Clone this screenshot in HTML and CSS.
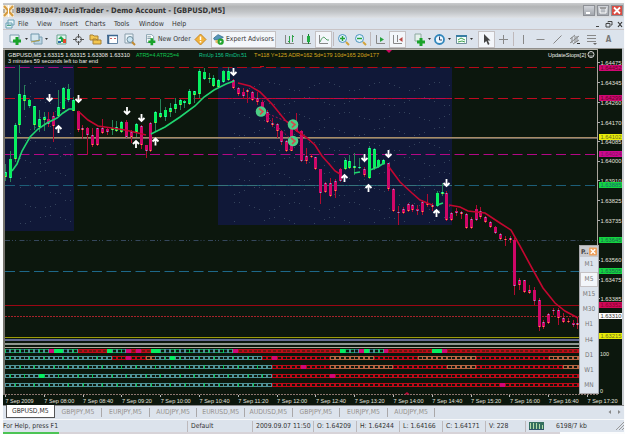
FILE: index.html
```html
<!DOCTYPE html>
<html lang="en">
<head>
    <meta charset="UTF-8">
    <title>AxisTrader</title>
    <link rel="stylesheet" href="styles.css">
</head>
<body>
    <div class="window">
        <header class="titlebar">
            <svg class="logo" viewBox="0 0 11 12"><rect width="11" height="12" fill="#f6ead2"/><path d="M1 1L10 11M10 1L1 11" stroke="#d59a3c" stroke-width="2"/><path d="M5.500 0V12" stroke="#fff" stroke-width="1"/><path d="M1 4V8M10 4V8" stroke="#777"/></svg>
            <h1>889381047: AxisTrader - Demo Account - [GBPUSD,M5]</h1>
            <div class="window-buttons">
                <span><svg viewBox="0 0 12 11"><path d="M3 8H7" stroke="#fff" stroke-width="2"/></svg></span>
                <span><svg viewBox="0 0 12 11"><path d="M3 3H9V8H3Z" stroke="#fff" fill="none"/><path d="M3 3H9" stroke="#555"/></svg></span>
                <span class="close"><svg viewBox="0 0 12 11"><path d="M3 2.500L9 8.500M9 2.500L3 8.500" stroke="#fff" stroke-width="1.800"/></svg></span>
            </div>
        </header>
        <nav class="menu">
            <svg class="menu-icon" viewBox="0 0 10 10"><path d="M3 1H9V6H3ZM1 4H7V9H1Z" fill="#e9f6f8" stroke="#6a9fb4"/><path d="M2 6.500H6" stroke="#53a684"/></svg>
            <span>File</span><span>View</span><span>Insert</span><span>Charts</span><span>Tools</span><span>Window</span><span>Help</span>
            <div class="mdi">
                <svg viewBox="0 0 33 10"><path d="M5 7.500H8M17 3.500V2.500H21V6H20M15 4.500H19V8H15Z" fill="none" stroke="#444"/><path d="M27 3L31 8M31 3L27 8" stroke="#333" stroke-width="1.200"/></svg>
            </div>
        </nav>
        <div class="toolbar">
            <i class="grip"></i>
            <svg class="tool" viewBox="0 0 17 17"><path d="M2 4H11V11H2Z" fill="#eaf3f3" stroke="#7a9eae"/><path d="M9 6V14M5 10H13" stroke="#19a32a" stroke-width="3"/></svg>
            <i class="drop"></i>
            <svg class="tool" viewBox="0 0 17 17"><path d="M6 6H14V13H6Z" fill="#bcd5e3" stroke="#7c9fb2"/><path d="M3 3H11V10H3Z" fill="#d4e6ef" stroke="#6f97ac"/><path d="M3 11L8 10L12 9" stroke="#ad9d48"/></svg>
            <i class="drop"></i>
            <i class="grip"></i>
            <svg class="tool" viewBox="0 0 17 17"><path d="M4 4H13V13H4Z" fill="#e2f4ee" stroke="#6aa391"/><path d="M5 8L8 5L11 8ZM8 8H10V11H8Z" fill="#19a847"/><path d="M10 8H13V12H10Z" fill="#e04b2e"/><path d="M5 11H8" stroke="#2868a8" stroke-width="2"/></svg>
            <svg class="tool" viewBox="0 0 17 17"><circle cx="8.500" cy="8.500" r="3" fill="none" stroke="#555"/><path d="M8.500 3V7M8.500 10V14M3 8.500H7M10 8.500H14" stroke="#555"/></svg>
            <svg class="tool" viewBox="0 0 17 17"><path d="M3 4H6L7 5H11V9H3ZM6 8H9L10 9H14V13H6Z" fill="#f3c650" stroke="#a98132"/></svg>
            <svg class="tool" viewBox="0 0 17 17"><path d="M3.500 4.500H13.500V12.500H3.500Z" fill="#fff" stroke="#6685a2"/><path d="M3 4.500H14M4.500 4V13" stroke="#3c668f" stroke-width="1.500"/><path d="M6 7.500H8M10 7.500H12" stroke="#c66"/></svg>
            <svg class="tool" viewBox="0 0 17 17"><path d="M4 3H12V12H4Z" fill="#edf5fa" stroke="#899daa"/><circle cx="9" cy="8.500" r="3" fill="#c9e5f3" stroke="#708c9b"/><path d="M11 11L14 14" stroke="#c28b32" stroke-width="2"/></svg>
            <i class="grip"></i>
            <span class="wide-tool new-order"><svg viewBox="0 0 17 17"><path d="M4 3H10L12 5V12H4Z" fill="#fff" stroke="#819daa"/><path d="M5 5.500H9M5 7.500H10" stroke="#6b8c99"/><path d="M10 7V15M6 11H14" stroke="#19a32a" stroke-width="3"/></svg>New Order</span>
            <svg class="tool alert" viewBox="0 0 17 17"><path d="M8.500 3L14 8.500L8.500 14L3 8.500Z" fill="#f3b43d" stroke="#c78824"/><path d="M8.500 5.500V9M8.500 10V11.500" stroke="#fff" stroke-width="1.500"/></svg>
            <span class="wide-tool experts pressed"><svg viewBox="0 0 17 17"><path d="M3 7L8 3L14 6L10 8L4 9Z" fill="#5796ba" stroke="#3d7493"/><path d="M5 9H9V14L5 12Z" fill="#e3b968"/><circle cx="11" cy="11" r="3.500" fill="#22a52e"/><path d="M10 9.500L12.500 11L10 12.500Z" fill="#fff"/></svg>Expert Advisors</span>
            <i class="grip"></i>
            <svg class="tool" viewBox="0 0 17 17"><path d="M4.500 4V12.500H13" fill="none" stroke="#888"/><path d="M8.500 5V12M7 10.500H8M11.500 4V11M12 5.500H13" stroke="#31a24a"/></svg>
            <svg class="tool" viewBox="0 0 17 17"><path d="M4.500 4V12.500H13" fill="none" stroke="#888"/><path d="M10.500 3V13" stroke="#167e2f"/><path d="M9 5H12V11H9Z" fill="#22ac42"/></svg>
            <svg class="tool pressed" viewBox="0 0 17 17"><path d="M4.500 4V12.500H13" fill="none" stroke="#888"/><path d="M5 11Q8 4 10 7T14 9" fill="none" stroke="#56a069"/></svg>
            <i class="sep"></i>
            <svg class="tool" viewBox="0 0 17 17"><circle cx="7.500" cy="7.500" r="4" fill="#dff2fb" stroke="#4c94bd"/><path d="M11 11L14 14" stroke="#d1a33c" stroke-width="2"/><path d="M7.500 5V10M5 7.500H10" stroke="#21a135" stroke-width="1.400"/></svg>
            <svg class="tool" viewBox="0 0 17 17"><circle cx="7.500" cy="7.500" r="4" fill="#dff2fb" stroke="#4c94bd"/><path d="M11 11L14 14" stroke="#d1a33c" stroke-width="2"/><path d="M5 7.500H10" stroke="#21a135" stroke-width="1.400"/></svg>
            <i class="sep"></i>
            <svg class="tool" viewBox="0 0 17 17"><path d="M4.500 4V12.500H13" fill="none" stroke="#888"/><path d="M8 6L12 8.500L8 11Z" fill="#26a23c"/></svg>
            <svg class="tool pressed" viewBox="0 0 17 17"><path d="M4.500 4V12.500H13M8.500 4V11" fill="none" stroke="#888"/><path d="M13.500 6V11L10 8.500Z" fill="#ba4642"/></svg>
            <i class="grip"></i>
            <svg class="tool" viewBox="0 0 17 17"><path d="M4 3H10V10H4Z" fill="#e5f1eb" stroke="#8ea9a0"/><path d="M10 7V15M6 11H14" stroke="#19a32a" stroke-width="3"/></svg>
            <i class="drop"></i>
            <svg class="tool" viewBox="0 0 17 17"><circle cx="8.500" cy="8.500" r="4.500" fill="#eef8ff" stroke="#3186bb" stroke-width="1.800"/><path d="M8.500 5.500V9H11" fill="none" stroke="#346"/></svg>
            <i class="drop"></i>
            <svg class="tool spaced" viewBox="0 0 17 17"><path d="M3.500 4.500H13.500V12.500H3.500Z" fill="#f4fffa" stroke="#718f9e"/><path d="M3 5H14" stroke="#397da3" stroke-width="2"/><path d="M5 9L8 7L12 9M5 11L9 10L12 11" fill="none" stroke="#41a150"/></svg>
            <i class="drop"></i>
            <i class="grip"></i>
            <svg class="tool pressed" viewBox="0 0 17 17"><path d="M6 3V12L8.300 10L10 14L11.500 13L9.800 9.500H12.500Z" fill="#444"/></svg>
            <svg class="tool" viewBox="0 0 17 17"><path d="M8.500 4V13M4 8.500H13" stroke="#888"/></svg>
            <i class="sep"></i>
            <svg class="tool" viewBox="0 0 17 17"><path d="M8.500 4V13" stroke="#888"/></svg>
            <svg class="tool" viewBox="0 0 17 17"><path d="M4.500 8.500H12.500" stroke="#888"/></svg>
            <svg class="tool" viewBox="0 0 17 17"><path d="M4.500 12.500L12.500 4.500" stroke="#888"/></svg>
            <svg class="tool" viewBox="0 0 17 17"><path d="M4 8L9 4M4 12L13 5M7 13L13 9M6 6V12M9 5V12M11 5V11" stroke="#888"/><path d="M11 12.500H14" stroke="#333"/></svg>
            <svg class="tool" viewBox="0 0 17 17"><path d="M4 4.500H13M4 7.500H13M4 10.500H13" stroke="#888"/><path d="M10 12H14L12 14Z" fill="#666"/></svg>
            <span class="tool letter">A</span>
        </div>
        <main class="chart">
            <svg id="chart" viewBox="0 48 621 357"></svg>
            <aside class="periods">
                <div class="periods-head">P..<svg viewBox="0 0 9 9"><rect width="9" height="9" rx="1" fill="#eda05c"/><path d="M2 2L7 7M7 2L2 7" stroke="#fff" stroke-width="1.500"/></svg></div>
                <span>M1</span><span class="pressed">M5</span><span>M15</span><span>M30</span><span>H1</span><span>H4</span><span>D1</span><span>W1</span><span>MN</span>
            </aside>
        </main>
        <div class="tabs">
            <span class="active">GBPUSD,M5</span><span>GBPJPY,M5</span><span>EURJPY,M5</span><span>AUDJPY,M5</span><span>EURUSD,M5</span><span>AUDUSD,M5</span><span>GBPJPY,M5</span><span>EURJPY,M5</span><span>AUDJPY,M5</span>
            <svg class="tab-scroll" viewBox="0 0 16 8"><path d="M4 2V6L1.500 4ZM11 2V6L13.500 4Z" fill="#888"/></svg>
        </div>
        <footer class="status">
            <span>For Help, press F1</span>
            <span>Default</span>
            <span>2009.09.07 11:50</span>
            <span>O: 1.64209</span>
            <span>H: 1.64244</span>
            <span>L: 1.64166</span>
            <span>C: 1.64171</span>
            <span>V: 228</span>
            <span class="traffic"><svg viewBox="0 0 15 8"><rect width="15" height="8" fill="#35705f"/><path d="M1.500 1V7M4.500 1V7M7.500 1V7M10.500 2V7M13.500 3V7" stroke="#b4d9a9"/><path d="M0 7.500H15" stroke="#31546c"/></svg>6198/7 kb</span>
            <svg class="resize" viewBox="0 0 8 8"><path d="M0 8L8 0M3 8L8 3M6 8L8 6" stroke="#999"/></svg>
        </footer>
    </div>
    <div class="below"></div>
    <script src="chart.js"></script>
</body>
</html>
```
FILE: styles.css
```css
body {
    margin: 0;
    padding: 3px 1px 0 3px;
    background: #fbfcfd;
    font-family: "DejaVu Sans Condensed", "Noto Sans", sans-serif;
    font-size: 6.8px;
    color: #333;
    overflow: hidden;
}
.window {
    width: 621px;
    height: 429px;
    display: flex;
    flex-direction: column;
    background: #dce3ec;
}
.titlebar {
    height: 15px;
    flex: none;
    display: flex;
    align-items: center;
    background: linear-gradient(#c9cbcd, #b2b4b5 25%, #c2c5c8 60%, #dfe2e6);
}
.logo {
    width: 11px;
    height: 12px;
}
h1 {
    margin: 0 0 0 2px;
    font-size: 7.5px;
    font-weight: bold;
    color: #333;
    white-space: nowrap;
}
.window-buttons {
    margin-left: auto;
    margin-right: 1px;
    display: flex;
    gap: 2px;
}
.window-buttons span {
    width: 12px;
    height: 11px;
    display: flex;
    background: linear-gradient(#d6d9de, #9da1a8);
    outline: 1px solid #8d9096;
    outline-offset: -1px;
}
.window-buttons .close {
    background: #d94c43;
}
.menu {
    height: 12px;
    box-sizing: border-box;
    flex: none;
    display: flex;
    align-items: center;
    border-bottom: 1px solid #c9c4c6;
    font-size: 7px;
}
.menu-icon {
    width: 10px;
    height: 10px;
    margin: 0 4px 0 2px;
}
.menu span {
    width: 24px;
    margin-left: -1px;
    white-space: nowrap;
}
.menu span:nth-of-type(1) { width: 20px; }
.menu span:nth-of-type(3) { width: 26px; }
.menu span:nth-of-type(4) { width: 30px; }
.menu span:nth-of-type(5) { width: 26px; }
.menu span:nth-of-type(6) { width: 34px; }
.mdi {
    margin-left: auto;
    width: 33px;
    height: 10px;
    display: flex;
}
.toolbar {
    height: 18px;
    flex: none;
    display: flex;
    align-items: center;
}
.tool {
    width: 17px;
    height: 17px;
    flex: none;
}
.spaced {
    margin-left: 2px;
}
.pressed {
    background: #f3f6fa;
    outline: 1px solid #c5c2c4;
    outline-offset: -1px;
}
.grip {
    width: 5px;
    height: 14px;
    flex: none;
    background: radial-gradient(#a8a5a8 35%, transparent 40%) 1px 0 / 2px 2px repeat-y;
}
.sep {
    width: 3px;
    height: 14px;
    flex: none;
    background: linear-gradient(90deg, transparent 33%, #bfb9bb 33%, #bfb9bb 66%, transparent 66%);
}
.drop {
    width: 3px;
    height: 2px;
    flex: none;
    background: #333;
    clip-path: polygon(0 0, 100% 0, 50% 100%);
}
.wide-tool {
    height: 17px;
    display: flex;
    align-items: center;
    white-space: nowrap;
    flex: none;
}
.wide-tool svg {
    width: 15px;
    height: 15px;
}
.new-order {
    width: 49px;
}
.experts {
    width: 65px;
    margin-left: 2px;
}
.letter {
    font-size: 8px;
    font-weight: bold;
    color: #777;
    text-align: center;
    line-height: 17px;
}
.chart {
    position: relative;
    height: 357px;
    flex: none;
    background: #0c170d;
}
#chart {
    display: block;
    width: 621px;
    height: 357px;
    font-family: "Liberation Sans", sans-serif;
}
/* floating timeframe palette */
.periods {
    position: absolute;
    left: 576px;
    top: 197px;
    width: 20px;
    height: 149px;
    box-sizing: border-box;
    border: 1px solid #a9a9ad;
    background: #dde4ed;
    display: flex;
    flex-direction: column;
    text-align: center;
    font-size: 6.5px;
    color: #777;
}
.periods-head {
    height: 11px;
    flex: none;
    display: flex;
    align-items: center;
    justify-content: space-between;
    padding: 0 1px;
    font-weight: bold;
    background: #c8cacf;
    color: #444;
}
.periods-head svg {
    width: 8px;
    height: 9px;
}
.periods span {
    flex: 1;
    line-height: 15px;
}
.tabs {
    height: 14px;
    flex: none;
    display: flex;
    align-items: center;
    color: #96928e;
    padding-left: 3px;
    box-shadow: inset 0 1px #8a8a8c;
}
.tabs span {
    width: 46.6px;
    line-height: 9px;
    text-align: center;
    border-right: 1px solid #aaa8a9;
    white-space: nowrap;
}
.tabs .active {
    align-self: flex-start;
    line-height: 12px;
    background: #fff;
    color: #333;
    border: 1px solid #555;
    border-top: 0;
}
.tab-scroll {
    width: 16px;
    height: 8px;
    margin-left: auto;
    margin-right: 1px;
}
.status {
    flex: 1;
    display: grid;
    grid-template-columns: 184px 65px 61px 43px 43px 43px 43px 40px 82px 17px;
    align-items: center;
    border-top: 1px solid #f6f8fa;
}
.status span {
    height: 11px;
    line-height: 11px;
    padding-left: 3px;
    border-left: 1px solid #bdb9bc;
    white-space: nowrap;
}
.status span:first-child {
    padding-left: 0;
    border: 0;
}
.status .traffic {
    display: flex;
    align-items: center;
}
.traffic svg {
    width: 15px;
    height: 8px;
    margin-right: 12px;
}
.resize {
    width: 8px;
    height: 8px;
    justify-self: end;
}
.below {
    width: 557px;
    height: 2px;
    background: linear-gradient(90deg, #4cc455 56px, #d7d3d8 56px);
}
```
FILE: chart.js
```javascript
var NS = 'http://www.w3.org/2000/svg';
var svg = document.getElementById('chart');
var STEP = 4.853;

// x is counted from the left edge of the browser window
var root = document.createElementNS(NS, 'g');
root.setAttribute('transform', 'translate(-3 0)');
svg.appendChild(root);

function add(tag, attrs, text) {
    var el = document.createElementNS(NS, tag);
    for (var key in attrs) el.setAttribute(key, attrs[key]);
    if (text) el.textContent = text;
    root.appendChild(el);
    return el;
}
function rect(x, y, w, h, fill) {
    add('rect', {x: x, y: y, width: w, height: h, fill: fill});
}
function line(x1, y, x2, color, dash, width) {
    add('line', {x1: x1, y1: y, x2: x2, y2: y, stroke: color, 'stroke-width': width || 1, 'stroke-dasharray': dash || 'none'});
}
function label(x, y, text, color, width) {
    add('text', {x: x, y: y, fill: color, 'font-size': 6.2, textLength: width, lengthAdjust: 'spacingAndGlyphs'}, text);
}

// session boxes
rect(5, 65, 69, 166, '#101838');
rect(218, 67, 234, 158, '#101838');

function dots(x1, x2, y1, y2) {
    for (var row = 0; y1 + row * 15 < y2; row++) {
        for (var x = x1; x < x2; x += 5) {
            var y = y1 + row * 15 + Math.sin(x / 9 + row * 2) * 4;
            if ((x * 7 + row * 11) % 4 && y < y2) rect(x, Math.round(y), 1, 1, '#34435c');
        }
    }
}
dots(20, 72, 84, 228);
dots(234, 450, 86, 223);

// levels
line(5, 67.5, 597, '#b50a18', '10 4.500');
line(5, 67.5, 74, '#a80c78', '10 4.500');
line(5, 98.5, 597, '#c00a20', '10 4.500');
line(218, 98.5, 452, '#c0084c', '10 2 1 1.500');
line(5, 137.5, 597, '#a98d67');
line(5, 138.5, 597, '#6c6660');
line(5, 154.5, 597, '#b30885', '10 4.500');
line(5, 185.5, 597, '#1d5e78', '10 4.500');
line(218, 185.5, 452, '#35737b', '10 2 1 1.500');
line(5, 240.5, 597, '#35475c', '5 2 1 2 1 3.500');
line(5, 271.5, 597, '#1e6888', '10 4.500');
line(5, 305.5, 597, '#9c0714');
line(5, 316.5, 597, '#a8232a', '2 1');
line(5, 337.5, 597, '#9d9b08');
line(5, 340, 597, '#656b92', null, 2);
line(5, 344, 597, '#8f9690', null, 2);
line(3, 347.5, 597, '#b0aa9c');

// y of: body top, body bottom, high, low; 1 = up
var candles = [
    [172,177,164,181,1],[159,178,151,182,1],[125,159,123,162,1],[94,125,65,133,1],[95,101,85,110,1],
    [100,106,99,108,1],[106,125,106,130,1],[119,127,110,132,1],[117,120,112,131,1],[119,124,112,127,0],
    [116,126,112,142,0],[107,116,90,117,1],[88,109,87,109,1],[89,100,84,102,1],[100,111,97,111,1],
    [111,130,111,132,0],[128,130,125,139,0],[128,135,127,155,0],[135,145,128,147,0],[128,145,128,146,0],
    [128,133,119,134,0],[129,132,127,135,0],[128,130,120,135,1],[127,131,121,132,1],[122,132,121,133,1],
    [122,137,120,138,0],[132,137,130,143,0],[124,132,123,137,1],[126,145,125,149,0],[145,151,145,158,0],
    [123,151,122,152,0],[112,123,111,132,1],[113,117,99,118,1],[110,117,107,121,1],[108,112,103,117,1],
    [104,109,98,113,1],[100,105,99,110,1],[101,103,100,108,1],[91,104,89,105,1],[91,95,91,103,1],
    [71,94,69,98,1],[72,79,68,80,1],[78,79,73,83,1],[78,86,75,87,1],[80,87,79,87,1],
    [71,82,70,83,1],[71,80,67,81,1],[80,88,79,89,0],[88,94,87,96,0],[92,96,88,99,0],
    [90,92,89,103,0],[92,100,91,101,0],[98,102,92,105,0],[102,113,100,114,0],[112,122,110,123,0],
    [123,125,118,127,0],[124,131,123,138,0],[131,142,130,145,0],[141,151,140,152,0],[123,151,123,151,0],
    [123,131,113,132,0],[131,161,130,162,0],[156,161,148,164,0],[156,157,154,158,0],[157,169,157,170,0],
    [169,193,169,204,0],[183,192,182,193,0],[183,196,178,197,0],[181,191,179,198,0],[169,181,168,182,0],
    [160,169,158,170,1],[161,168,155,169,1],[166,168,153,175,1],[167,168,158,169,1],[169,175,167,177,0],
    [148,178,146,179,1],[149,168,148,170,1],[160,167,159,168,1],[160,164,159,165,1],[163,189,163,191,0],
    [189,211,188,212,0],[212,213,206,225,0],[209,213,207,214,0],[204,211,203,212,0],[205,210,204,212,0],
    [209,211,205,215,0],[202,212,200,215,0],[203,205,194,207,0],[205,207,203,211,0],[193,206,191,207,1],
    [192,194,183,196,1],[193,220,191,221,0],[213,220,212,221,0],[211,213,208,216,0],[212,214,211,219,0],
    [214,228,213,229,0],[219,228,217,229,0],[209,220,205,221,0],[211,217,207,219,0],[217,222,216,223,0],
    [222,227,221,228,0],[227,233,226,234,0],[234,239,233,240,0],[239,240,236,246,0],[238,240,236,243,0],
    [240,286,238,295,0],[280,285,278,290,0],[280,292,280,293,0],[290,293,285,294,0],[290,301,287,305,0],
    [300,327,298,331,0],[322,327,320,329,0],[314,323,313,324,0],[310,311,308,315,0],[310,318,308,325,0],
    [318,322,313,323,0],[321,322,318,323,0],[323,325,320,327,0],[323,325,318,329,0]
];
candles.forEach(function (c, i) {
    var x = Math.floor(5.300 + i * STEP);
    rect(x, c[2], 1, c[3] - c[2], c[4] ? '#248458' : '#b00a30');
    rect(x - 1, c[0], 3, c[1] - c[0], c[4] ? '#08f060' : '#cf0768');
    // open / close marks
    rect(x, i % 4 == 1 ? c[1] - 1 : c[0], 1, 1, '#42dce0');
    if (i % 4 != 1) rect(x, c[1] - 1, 1, 1, '#f0c31c');
});

// moving average, coloured by direction
var average = [
    ['#20d670', '12,171 17,164 22,151 30,137 38,129 47,123 57,118 63,113 69,109 74,109'],
    ['#c30730', '78,111 88,120 98,126 112,128 125,130 138,133 146,135'],
    ['#20d670', '151,134 165,127 180,117 195,106 204,97 214,90 226,84 234,81'],
    ['#c30730', '238,83 250,86 260,92 272,104 285,120 297,131 307,138 315,145 322,156 330,165 335,171 340,174'],
    ['#20d670', '354,173 360,172'],
    ['#20d670', '370,170 378,167 384,163'],
    ['#c30730', '389,167 400,182 412,193 420,200 432,205'],
    ['#20d670', '437,205 443,203'],
    ['#c30730', '449,205 460,207 468,211 485,213 500,223 511,230 520,246 533,270 543,288 555,303 565,311 578,318']
];
average.forEach(function (a) {
    add('polyline', {points: a[1], fill: 'none', stroke: a[0], 'stroke-width': 1.6});
});

// trade marks
add('path', {d: 'M261 111L293 124M261 112L293 141', stroke: '#b00a50', 'stroke-dasharray': '2 2'});
[[261, 111.5], [293, 124.5], [293, 141]].forEach(function (p) {
    add('circle', {cx: p[0], cy: p[1], r: 5.3, fill: '#4ccf86'});
    add('path', {d: 'M' + (p[0] - 2) + ' ' + (p[1] - 3) + 'l4 3l-3 3', fill: 'none', stroke: '#d34b4e', 'stroke-width': 1.6});
});

function arrow(x, y, dir) {
    add('path', {d: 'M' + x + ' ' + (y - 4 * dir) + 'V' + (y + 3 * dir) + 'M' + (x - 3) + ' ' + y + 'L' + x + ' ' + (y + 3 * dir) + 'L' + (x + 3) + ' ' + y, fill: 'none', stroke: '#fff', 'stroke-width': 1.8});
}
[[49.5,98],[78.5,99],[127,111],[141.5,118],[233.5,72],[364.5,158],[388.5,154],[446.5,183]].forEach(function (p) { arrow(p[0], p[1], 1); });
[[58.5,129],[136,144],[155.500,141.5],[344.500,178],[368.500,188],[436.5,213]].forEach(function (p) { arrow(p[0], p[1], -1); });

// trend matrix: [end x, colour key] for every row
var colors = {t: '#4f9298', g: '#05ed60', r: '#bd0a18', m: '#cf0775', o: '#b96442'};
var rows = [
    [351, [[47,'t'],[52,'m'],[56,'r'],[61,'g'],[76,'t'],[80,'m'],[109,'r'],[114,'g'],[124,'t'],[129,'m'],[134,'r'],[138,'g'],[143,'m'],[153,'r'],[158,'g'],[231,'t'],[236,'m'],[342,'r'],[347,'g'],[361,'t'],[366,'m'],[371,'g'],[385,'t'],[390,'m'],[434,'r'],[443,'g'],[448,'m'],[579,'r']]],
    [358, [[114,'t'],[124,'r'],[129,'m'],[144,'r'],[156,'o'],[168,'t'],[173,'g'],[260,'t'],[270,'r'],[275,'m'],[332,'r'],[376,'o'],[418,'r'],[477,'o'],[550,'r'],[579,'o']]],
    [367, [[274,'t'],[299,'r'],[304,'m'],[332,'r'],[391,'o'],[448,'r'],[478,'o'],[565,'r'],[579,'o']]],
    [376, [[37,'t'],[42,'g'],[274,'t'],[328,'r'],[333,'m'],[579,'r']]],
    [385, [[274,'t'],[502,'r'],[507,'m'],[579,'r']]]
];
rows.forEach(function (row, r) {
    var part = 0;
    for (var i = 0; i < 119; i++) {
        var x = Math.round(5 + i * STEP);
        while (part < row[1].length - 1 && x + 2.4 > row[1][part][0]) part++;
        var key = row[1][part][1];
        rect(x, row[0] - 2, 5, 4, colors[key]);
        if (key == 'm' || key == 'g') continue;
        if (key == 't' && (i * 5 + r * 3) % 7 < 2) rect(x, row[0] - 2, 1, 4, '#10c760');
        if (r == 0 && key == 't') rect(x + 1, row[0] - 2, 3, 4, i % 3 ? '#0c9a52' : '#236578');
        rect(x + 1, row[0] - 1, 3, 2, r == 0 && key == 'r' ? '#681810' : '#0c170d');
    }
});

// frame and axes
rect(3, 48, 2, 347, '#77756f');
rect(3, 48, 621, 1, '#908f8c');
rect(3, 49, 595, 1, '#b5b2aa');
rect(597, 49, 1, 346, '#aaa59c');
line(5, 394.5, 598, '#8c7670', '2 1');
rect(622, 48, 2, 357, '#c8ccd1');

['2009','08:00','08:40','09:20','10:00','10:40','11:20','12:00','12:40','13:20','14:00','14:40','15:20','16:00','16:40','17:20'].forEach(function (t, i) {
    var x = 5 + i * 38.8;
    rect(Math.round(x), 395, 1, 2, '#bbb');
    label(x + 0.500, 402.5, '7 Sep ' + t, '#e2e2de', i ? 30 : 28);
});

[['1.64475',62],['1.64345',82],['1.64260',102],['1.64170',122],['1.64085',141],['1.64000',160.5],['1.63910',180],['1.63825',200],['1.63735',220],['1.63560',259.5],['1.63475',279],['1.63385',298]].forEach(function (p) {
    rect(597, Math.round(p[1]), 3, 1, '#aaa');
    label(600.5, p[1] + 2.500, p[0], '#e2e2de', 21);
});
[['1.64452',68,'#d00872','#650024'],['1.64299',98,'#d00872','#650024'],['1.64102',137,'#e8ec08','#6c6c20'],['1.64024',154,'#cc0890','#85105c'],['1.63885',185,'#14d440','#1c6470'],['1.63645',240,'#14d440','#1c6450'],['1.63505',271,'#14d440','#1c6450'],['1.63352',305,'#d00858','#850028'],['1.63310',316,'#fff','#333'],['1.63215',336,'#e8ec08','#6c6c20']].forEach(function (p) {
    rect(599, p[1] - 3, 23, 6, p[2]);
    label(600.5, p[1] + 2.200, p[0], p[3], 21);
});
label(600, 355.5, '100', '#e2e2de', 9);
label(600, 393, '0', '#e2e2de', 3);

// chart header
label(8, 57, 'GBPUSD,M5  1.63315 1.63315 1.63308 1.63310', '#f0f0ec', 122);
label(136, 57, 'ATR5=4  ATR25=4', '#10c850', 43);
label(199, 57, 'RmUp 156  RmDn.51', '#10c890', 48);
label(254, 57, 'T=118  Y=125  ADR=162  5d=179  10d=165  20d=177', '#dba81c', 125);
label(8, 63, '3 minutes 59 seconds left to bar end', '#f0f0ec', 90);
label(548, 57, 'UpdateStops[2]', '#f0f0ec', 38);
add('circle', {cx: 591, cy: 54.5, r: 3, fill: 'none', stroke: '#ddd'});
add('path', {d: 'M589.500 55.500q1.500 1.500 3 0M590 53.500v.6M592 53.500v.6', fill: 'none', stroke: '#ddd', 'stroke-width': 0.7});
add('path', {d: 'M386 50h6l-3 3z', fill: '#d00860'});
add('path', {d: 'M404 394.500l3 -2.500l3 2.500z', fill: '#c00838'});
rect(260, 66, 4, 1, '#c00a18');
```
